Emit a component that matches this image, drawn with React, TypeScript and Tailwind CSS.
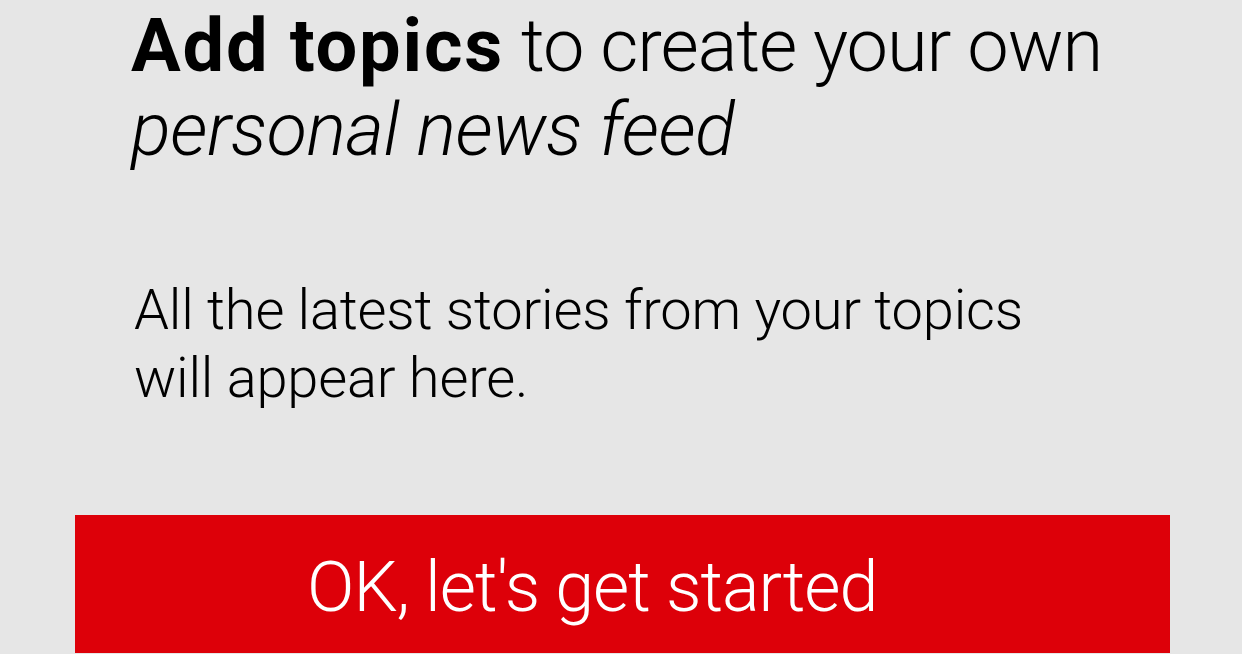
export default function App() {
  return (
    <div
      className="w-[1242px] h-[654px] overflow-hidden bg-[#e6e6e6] text-black"
      style={{ fontFamily: "Roboto, 'Liberation Sans', sans-serif" }}
    >
      {/* Heading */}
      <h1 className="pl-[131px] pt-[4px] text-[74px] leading-[84px] font-light tracking-[-1.1px]">
        <span className="font-bold tracking-[1.8px]">Add topics</span> to create your own
        <br />
        <em className="italic tracking-[-0.45px]">personal news feed</em>
      </h1>

      {/* Body copy */}
      <p className="pl-[134px] mt-[104px] text-[56px] leading-[68px] font-light tracking-[-0.2px]">
        All the latest stories from your topics
        <br />
        will appear here.
      </p>

      {/* CTA */}
      <div className="pl-[75px] mt-[103px]">
        <button className="flex items-start w-[1095px] h-[138px] bg-[#dd0009] text-white text-[70px] leading-[70px] font-light tracking-[-1px] pl-[232px] pt-[37px]">
          OK, let's get started
        </button>
      </div>
    </div>
  );
}
